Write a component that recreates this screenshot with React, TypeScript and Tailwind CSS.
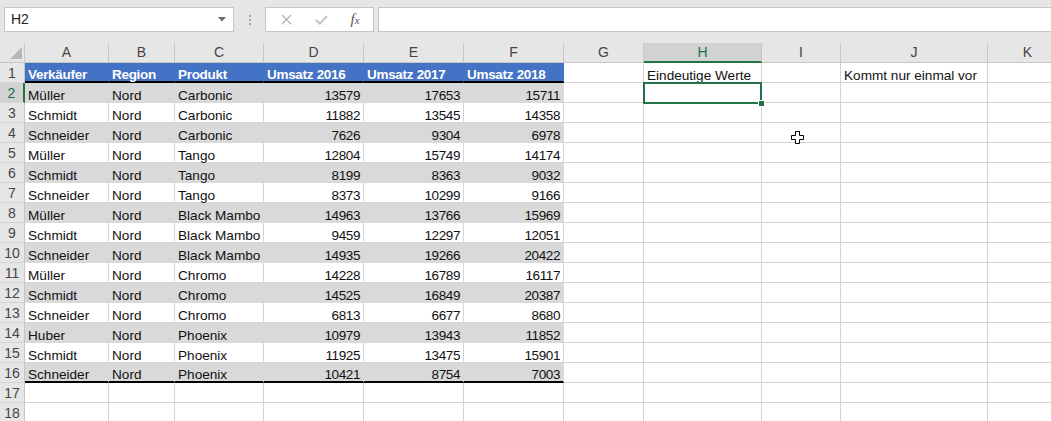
import React from "react";

const letters = ["A", "B", "C", "D", "E", "F", "G", "H", "I", "J", "K"];

const data: [string, string, string, number, number, number][] = [
  ["Müller", "Nord", "Carbonic", 13579, 17653, 15711],
  ["Schmidt", "Nord", "Carbonic", 11882, 13545, 14358],
  ["Schneider", "Nord", "Carbonic", 7626, 9304, 6978],
  ["Müller", "Nord", "Tango", 12804, 15749, 14174],
  ["Schmidt", "Nord", "Tango", 8199, 8363, 9032],
  ["Schneider", "Nord", "Tango", 8373, 10299, 9166],
  ["Müller", "Nord", "Black Mambo", 14963, 13766, 15969],
  ["Schmidt", "Nord", "Black Mambo", 9459, 12297, 12051],
  ["Schneider", "Nord", "Black Mambo", 14935, 19266, 20422],
  ["Müller", "Nord", "Chromo", 14228, 16789, 16117],
  ["Schmidt", "Nord", "Chromo", 14525, 16849, 20387],
  ["Schneider", "Nord", "Chromo", 6813, 6677, 8680],
  ["Huber", "Nord", "Phoenix", 10979, 13943, 11852],
  ["Schmidt", "Nord", "Phoenix", 11925, 13475, 15901],
  ["Schneider", "Nord", "Phoenix", 10421, 8754, 7003],
];

type Fill = "none" | "gray" | "blue";

function Cell({
  fill = "none",
  thick = false,
  right = false,
  bold = false,
  num = false,
  children,
  selected = false,
}: {
  fill?: Fill;
  thick?: boolean;
  right?: boolean;
  bold?: boolean;
  num?: boolean;
  children?: React.ReactNode;
  selected?: boolean;
}) {
  const fillCls =
    fill === "gray"
      ? "bg-[#d9d9d9] border-[#d9d9d9]"
      : fill === "blue"
      ? "bg-[#4472c4] border-[#4472c4] text-white"
      : "bg-white border-[#d4d4d4]";
  const bottom = thick ? "border-b-2 border-b-black" : "border-b";
  return (
    <div
      className={`relative flex items-end whitespace-nowrap leading-[13px] border-r ${bottom} ${fillCls} ${
        right ? "justify-end pr-[3px]" : "pl-[3px]"
      } ${bold ? "font-bold text-[13.5px] tracking-[-0.3px]" : num ? "text-[13.5px] tracking-[-0.4px]" : "text-[13.6px]"} ${
        fill === "blue" ? "" : "text-[#111]"
      }`}
    >
      {children}
      {selected && (
        <>
          <div className="absolute left-[-1px] top-[-1px] right-[-1px] bottom-[-2px] border-2 border-[#217346] z-10 pointer-events-none" />
          <div className="absolute right-[-4px] bottom-[-5px] w-[7px] h-[7px] bg-[#217346] border border-white z-20" />
        </>
      )}
    </div>
  );
}

function RowHead({ n, active = false }: { n: number; active?: boolean }) {
  return (
    <div
      className={`flex items-center justify-center pt-[1px] text-[14px] border-b border-[#d4d4d4] ${
        active
          ? "bg-[#d2d2d2] text-[#217346] border-r-2 border-r-[#217346]"
          : "bg-[#e6e6e6] text-[#444] border-r border-r-[#c6c6c6]"
      }`}
    >
      {n}
    </div>
  );
}

export default function App() {
  return (
    <div className="relative w-[1051px] h-[421px] overflow-hidden bg-white font-['Liberation_Sans',Arial,sans-serif] select-none">
      {/* Formula bar */}
      <div className="flex items-start h-[43px] bg-[#e6e6e6] pt-[7px]">
        <div className="ml-[4px] w-[230px] h-[25px] bg-white border border-[#c6c6c6] flex items-center justify-between pl-[6px] pr-[7px]">
          <span className="text-[14px] text-[#222]">H2</span>
          <svg width="8" height="5" viewBox="0 0 8 5">
            <path d="M0 0 H8 L4 4.5 Z" fill="#6a6a6a" />
          </svg>
        </div>
        <div className="w-[31px] h-[25px] flex flex-col items-center justify-center gap-[2px]">
          <div className="w-[2px] h-[2px] bg-[#a6a6a6]" />
          <div className="w-[2px] h-[2px] bg-[#a6a6a6]" />
          <div className="w-[2px] h-[2px] bg-[#a6a6a6]" />
        </div>
        <div className="w-[109px] h-[25px] bg-white border border-[#c6c6c6] flex items-center">
          <div className="w-[38px] flex justify-center pl-[2px]">
            <svg width="11" height="11" viewBox="0 0 11 11">
              <path d="M1 1 L10 10 M10 1 L1 10" stroke="#b4b4b4" strokeWidth="1.3" fill="none" />
            </svg>
          </div>
          <div className="w-[34px] flex justify-center">
            <svg width="13" height="10" viewBox="0 0 13 10">
              <path d="M1 5 L4.8 8.6 L12 1.2" stroke="#c4c4c4" strokeWidth="2" fill="none" />
            </svg>
          </div>
          <div className="w-[34px] flex justify-center">
            <span className="font-['Liberation_Serif',serif] italic text-[15px] text-[#555] leading-none">
              f<span className="text-[11px]">x</span>
            </span>
          </div>
        </div>
        <div className="ml-[4px] flex-1 h-[25px] bg-white border border-[#c6c6c6] border-r-0" />
      </div>

      {/* Sheet grid */}
      <div className="grid grid-cols-[25px_84px_66px_89px_100px_100px_100px_80px_118px_79px_147px_80px] auto-rows-[20px]">
        {/* Header row */}
        <div className="relative bg-[#e6e6e6] border-r border-b border-[#c6c6c6]">
          <svg className="absolute left-[10px] top-[4px]" width="12" height="12" viewBox="0 0 12 12">
            <path d="M12 0 V12 H0 Z" fill="#b8b8b8" />
          </svg>
        </div>
        {letters.map((l) =>
          l === "H" ? (
            <div
              key={l}
              className="flex items-center justify-center text-[14px] bg-[#d2d2d2] text-[#217346] border-r border-r-[#c6c6c6] border-b-2 border-b-[#217346]"
            >
              {l}
            </div>
          ) : (
            <div
              key={l}
              className="flex items-center justify-center text-[14px] bg-[#e6e6e6] text-[#444] border-r border-b border-[#c6c6c6]"
            >
              {l}
            </div>
          )
        )}

        {/* Row 1 */}
        <RowHead n={1} />
        {["Verkäufer", "Region", "Produkt", "Umsatz 2016", "Umsatz 2017", "Umsatz 2018"].map((t) => (
          <Cell key={t} fill="blue" thick bold>
            {t}
          </Cell>
        ))}
        <Cell />
        <Cell>Eindeutige Werte</Cell>
        <Cell />
        <Cell>Kommt nur einmal vor</Cell>
        <Cell />

        {/* Data rows */}
        {data.map((r, i) => {
          const rowNum = i + 2;
          const gray = rowNum % 2 === 0;
          const fill: Fill = gray ? "gray" : "none";
          const thick = rowNum === 16;
          return (
            <React.Fragment key={rowNum}>
              <RowHead n={rowNum} active={rowNum === 2} />
              <Cell fill={fill} thick={thick}>{r[0]}</Cell>
              <Cell fill={fill} thick={thick}>{r[1]}</Cell>
              <Cell fill={fill} thick={thick}>{r[2]}</Cell>
              <Cell fill={fill} thick={thick} right num>{r[3]}</Cell>
              <Cell fill={fill} thick={thick} right num>{r[4]}</Cell>
              <Cell fill={fill} thick={thick} right num>{r[5]}</Cell>
              <Cell />
              <Cell selected={rowNum === 2} />
              <Cell />
              <Cell />
              <Cell />
            </React.Fragment>
          );
        })}

        {[17, 18].map((n) => (
          <React.Fragment key={n}>
            <RowHead n={n} />
            {letters.map((l) => (
              <Cell key={l} />
            ))}
          </React.Fragment>
        ))}
      </div>

      {/* Mouse cursor */}
      <svg className="absolute left-[791px] top-[131px] z-30" width="13" height="13" viewBox="0 0 13 13">
        <path
          d="M4.5 0.5 H8.5 V4.5 H12.5 V8.5 H8.5 V12.5 H4.5 V8.5 H0.5 V4.5 H4.5 Z"
          fill="#fff"
          stroke="#000"
          strokeWidth="1"
        />
      </svg>
    </div>
  );
}
